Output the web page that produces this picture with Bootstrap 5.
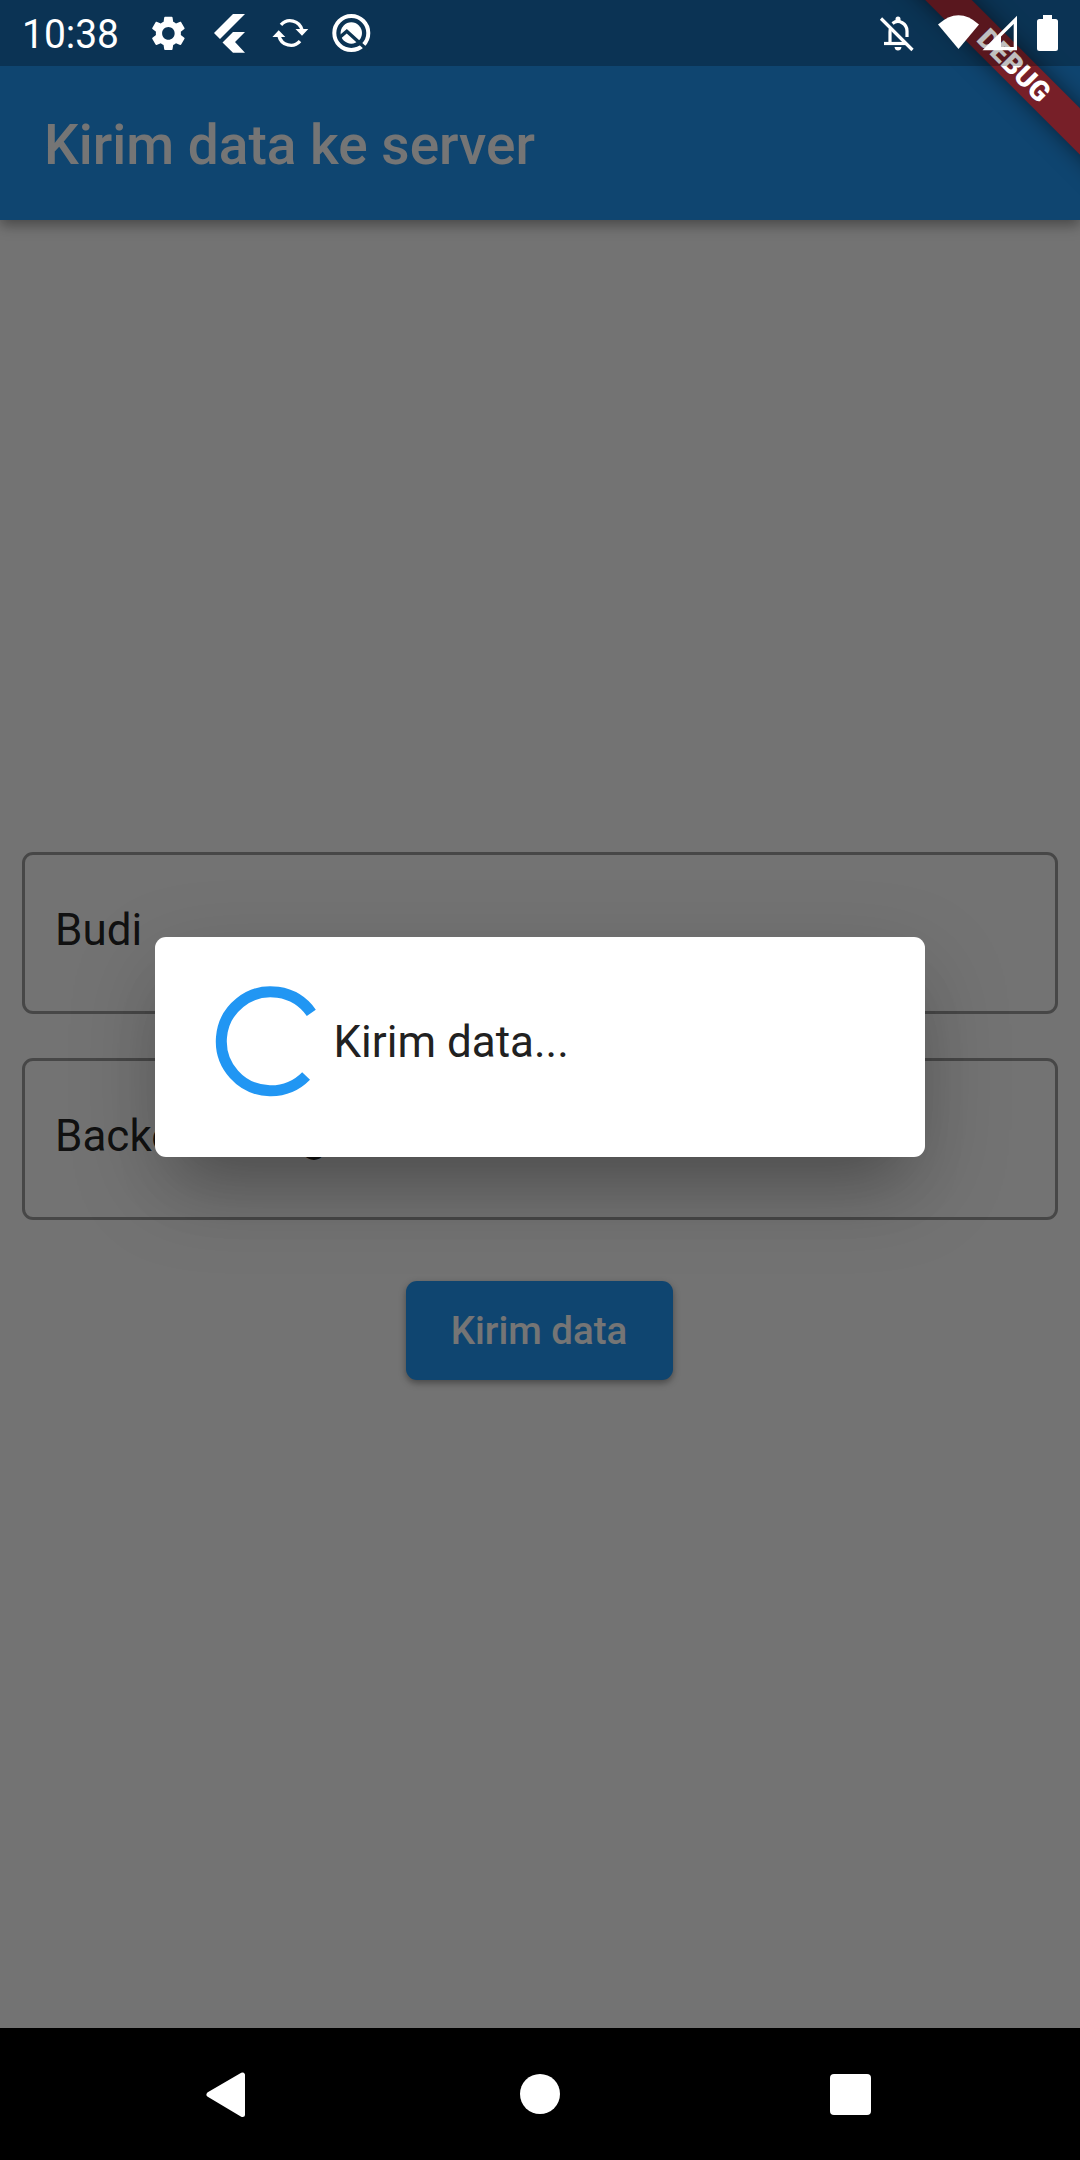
<!DOCTYPE html>
<html lang="id">
<head>
<meta charset="utf-8">
<meta name="viewport" content="width=device-width, initial-scale=1">
<title>Kirim data ke server</title>
<link href="https://cdn.jsdelivr.net/npm/bootstrap@5.3.0/dist/css/bootstrap.min.css" rel="stylesheet">
<style>
body{font-family:Roboto,"Noto Sans",sans-serif;background:#000;overflow:hidden}
.phone{width:1080px;height:2160px;background:#fafafa}
.app-top{height:220px;padding:69px 44px 0;background:#2196f3;color:#fff;box-shadow:0 5px 13px rgba(0,0,0,.38);z-index:1}
.app-top h1{font-size:55px;font-weight:500;line-height:64px}
.form-area{padding:0 22px}
.field-box{height:162px;border:3px solid rgba(0,0,0,.38);border-radius:11px;padding:0 30px 7px;font-size:44px;color:rgba(0,0,0,.87)}
.field-gap{gap:44px}
.tap-area{height:132px;padding-right:1px}
.btn-send{height:99px;width:267px;padding:2px 1px 0 0;border:0;border-radius:11px;background:#2196f3;color:#fff;font-size:38.5px;font-weight:500;box-shadow:0 3px 7px rgba(0,0,0,.38)}
.btn-send:hover{background:#2196f3;color:#fff}
.nav-keys{height:132px;background:#000}
.scrim{height:2028px;background:rgba(0,0,0,.541);padding-top:66px;z-index:2}
.loading-card{width:770px;height:220px;border-radius:11px;padding:0 60px 10px;background:#fff;color:#212121;font-size:44px;box-shadow:0 44px 64px -26px rgba(0,0,0,.22),0 30px 90px rgba(0,0,0,.17)}
.loading-card svg{margin-top:-2px}
.loading-card span{margin-left:7.5px}
.ribbon-clip{width:240px;height:240px;overflow:hidden;z-index:3;pointer-events:none}
.ribbon{width:500px;height:33px;left:-76px;top:49px;transform:rotate(45deg);background:#771f28;box-shadow:0 0 22px rgba(0,0,0,.5);color:#fff;font-size:28px;font-weight:900;line-height:33px}
.status-line{height:66px;background:rgba(0,0,0,.25);z-index:4}
</style>
</head>
<body>
<div class="phone position-relative d-flex flex-column">
  <header class="app-top d-flex align-items-center position-relative"><h1 class="m-0">Kirim data ke server</h1></header>
  <main class="form-area flex-grow-1 d-flex flex-column justify-content-center field-gap">
    <div class="field-box d-flex align-items-center">Budi</div>
    <div class="field-box d-flex align-items-center">Backend Programmer</div>
    <div class="tap-area d-flex align-items-center justify-content-center">
      <button type="button" class="btn btn-send">Kirim data</button>
    </div>
  </main>
  <footer class="nav-keys">
    <svg width="1080" height="132" fill="#fff" stroke="#fff" stroke-linejoin="round">
      <path d="M209 66.5L242.5 47V86.5Z" stroke-width="5"/>
      <circle cx="540" cy="66" r="20" stroke="none"/>
      <rect x="830" y="46" width="41" height="41" rx="4" stroke="none"/>
    </svg>
  </footer>

  <div class="scrim position-absolute top-0 start-0 w-100 d-flex align-items-center justify-content-center">
    <div class="loading-card d-flex align-items-center" role="status">
      <svg width="111" height="111" viewBox="0 0 111 111" fill="none" stroke="#2196f3" stroke-width="11"><path d="M96.3 26.8A49.5 49.5 0 1 0 91.1 90"/></svg>
      <span>Kirim data...</span>
    </div>
  </div>

  <div class="ribbon-clip position-absolute top-0 end-0"><div class="ribbon position-absolute text-center">DEBUG</div></div>

  <div class="status-line position-absolute top-0 start-0 w-100 d-flex">
    <svg width="1080" height="66" fill="#fff">
      <text x="22" y="48" font-size="40" textLength="97" lengthAdjust="spacingAndGlyphs">10:38</text>
      <path transform="translate(147.5 12.5) scale(1.74)" d="M19.14 12.94c.04-.3.06-.61.06-.94 0-.32-.02-.64-.07-.94l2.03-1.58c.18-.14.23-.41.12-.61l-1.92-3.32c-.12-.22-.37-.29-.59-.22l-2.39.96c-.5-.38-1.03-.7-1.62-.94l-.36-2.54c-.04-.24-.24-.41-.48-.41h-3.84c-.24 0-.43.17-.47.41l-.36 2.54c-.59.24-1.13.57-1.62.94l-2.39-.96c-.22-.08-.47 0-.59.22L2.74 8.87c-.12.21-.08.47.12.61l2.03 1.58c-.05.3-.09.63-.09.94s.02.64.07.94l-2.03 1.58c-.18.14-.23.41-.12.61l1.92 3.32c.12.22.37.29.59.22l2.39-.96c.5.38 1.03.7 1.62.94l.36 2.54c.05.24.24.41.48.41h3.84c.24 0 .44-.17.47-.41l.36-2.54c.59-.24 1.13-.56 1.62-.94l2.39.96c.22.08.47 0 .59-.22l1.92-3.32c.12-.22.07-.47-.12-.61l-2.01-1.58zM12 15.6c-1.98 0-3.6-1.62-3.6-3.6s1.62-3.6 3.6-3.6 3.6 1.62 3.6 3.6-1.62 3.6-3.6 3.6z"/>
      <path d="M233 14H245L220 39L214 33ZM233 32H245L235 42L245 52.7H233L222.5 42.5Z"/>
      <g fill="none" stroke="#fff" stroke-width="3.4"><path d="M281 24.8A12.2 12.2 0 0 1 302 30"/><path d="M300 41.2A12.2 12.2 0 0 1 279 36"/></g>
      <path d="M295.5 29H308.3L302 35.8ZM272.4 37H285.3L278.7 30.2Z"/>
      <circle cx="351.3" cy="33" r="17" fill="none" stroke="#fff" stroke-width="4"/>
      <circle cx="351.3" cy="33" r="10.7"/>
      <path d="M339.5 37.5L346.8 31.2L368 50.5" fill="none" stroke="#0c3451" stroke-width="3.4"/>

      <g fill="none" stroke="#fff" stroke-width="3.2"><path d="M881 18.5L912.5 50"/><path d="M884 43.5H906"/><path d="M890 43V32Q890 29 891 27.5"/><path d="M892.5 23.5C899 18.5 907 24 907 31V37"/></g>
      <path d="M895.5 22V19Q895.5 16.5 898 16.5Q900.5 16.5 900.5 19V22ZM894.5 47H901.5Q901 50.5 898 50.5Q895 50.5 894.5 47Z"/>
      <path d="M938 24.5Q958.5 6 979 24.5L958.5 49Z"/>
      <path fill-rule="evenodd" d="M982.5 50.3L1017 15.7V50.3ZM1001 47H1013.7V24L1001 36.5Z"/>
      <path d="M1043 15H1052V19H1055.5Q1058 19 1058 21.5V48.5Q1058 51 1055.5 51H1039.5Q1037 51 1037 48.5V21.5Q1037 19 1039.5 19H1043Z"/>
    </svg>
  </div>
</div>
<script src="https://cdn.jsdelivr.net/npm/bootstrap@5.3.0/dist/js/bootstrap.bundle.min.js"></script>
</body>
</html>
